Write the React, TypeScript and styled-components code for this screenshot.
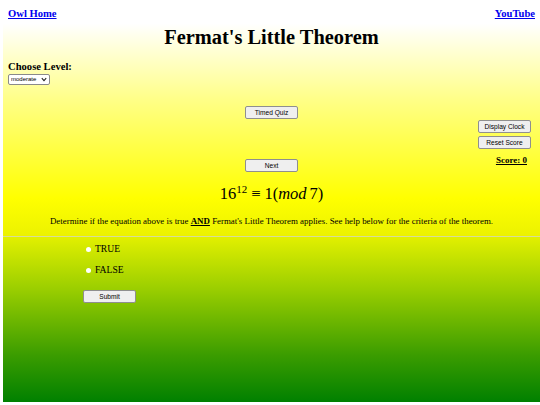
import React from "react";
import styled, { createGlobalStyle } from "styled-components";

const GlobalStyle = createGlobalStyle`
  html, body {
    margin: 0;
    padding: 0;
    background: #ffffff;
  }
  body {
    font-family: "Liberation Serif", "Times New Roman", serif;
    color: #000000;
  }
`;

const serif = `"Liberation Serif", "Times New Roman", serif`;
const sans = `"Liberation Sans", Arial, sans-serif`;

const Page = styled.div`
  width: 537px;
  margin-left: 3px;
`;

const TopSection = styled.div`
  height: 236px;
  background: linear-gradient(to bottom, #ffffff 10%, #ffff88 42%, #ffff00 84%, #ecf200 100%);
  border-bottom: 1px solid #d6dc9a;
  display: flex;
  flex-direction: column;
`;

const NavRow = styled.div`
  display: flex;
  justify-content: space-between;
  padding: 8px 5px 0 5px;
`;

const NavLink = styled.a`
  font-family: ${serif};
  font-size: 10.6px;
  font-weight: bold;
  color: #0000ee;
  text-decoration: underline;
`;

const Title = styled.h1`
  margin: 5px 0 0 0;
  text-align: center;
  font-family: ${serif};
  font-size: 20.4px;
  line-height: 26px;
  font-weight: bold;
`;

const LevelBlock = styled.div`
  margin-top: 10px;
  padding-left: 5px;
  display: flex;
  flex-direction: column;
  align-items: flex-start;
`;

const LevelLabel = styled.label`
  font-family: ${serif};
  font-size: 10.6px;
  font-weight: bold;
  line-height: 13px;
`;

const SelectWrap = styled.div`
  position: relative;
  width: 42px;
  height: 11px;
  margin-top: 1px;
`;

const LevelSelect = styled.select`
  appearance: none;
  display: block;
  width: 42px;
  height: 11px;
  margin: 0;
  padding: 0 0 0 2px;
  font-family: ${sans};
  font-size: 6px;
  line-height: 9px;
  color: #000000;
  border: 1px solid #8a8a8a;
  border-radius: 2px;
  background: #ffffff;
`;

const Chevron = styled.svg`
  position: absolute;
  right: 3px;
  top: 3px;
  pointer-events: none;
`;

const Controls = styled.div`
  margin-top: 21px;
  display: grid;
  grid-template-columns: 1fr auto 1fr;
`;

const CenterColumn = styled.div`
  grid-column: 2;
  display: flex;
  flex-direction: column;
  align-items: center;
  gap: 40px;
`;

const SidePanel = styled.div`
  grid-column: 3;
  display: flex;
  flex-direction: column;
  align-items: flex-end;
  padding: 14px 9px 0 0;
  gap: 3px;
`;

const Button = styled.button`
  width: 53px;
  height: 13px;
  padding: 0;
  font-family: ${sans};
  font-size: 6.6px;
  color: #000000;
  background: #efefef;
  border: 1px solid #8f8f8f;
  border-radius: 2px;
  line-height: 11px;
`;

const Score = styled.span`
  margin-top: 3px;
  margin-right: 4px;
  font-family: ${serif};
  font-size: 9px;
  font-weight: bold;
  text-decoration: underline;
  line-height: 11px;
`;

const Equation = styled.div`
  margin-top: 12px;
  text-align: center;
  font-family: ${serif};
  font-size: 16.5px;
  line-height: 20px;
`;

const Sup = styled.sup`
  font-size: 11px;
  vertical-align: 6px;
  line-height: 0;
`;

const Relation = styled.span`
  margin: 0 4px;
`;

const Italic = styled.i`
  font-style: italic;
  margin-right: 3px;
`;

const Instruction = styled.p`
  margin: 11px 0 0 0;
  text-align: center;
  font-family: ${serif};
  font-size: 8.9px;
  line-height: 12px;
`;

const Strong = styled.b`
  text-decoration: underline;
`;

const BottomSection = styled.div`
  height: 165px;
  background: linear-gradient(to bottom, #e2f000 0%, #9ed000 30%, #3a9c00 72%, #008000 100%);
  padding: 6px 0 0 80px;
  box-sizing: border-box;
`;

const Options = styled.div`
  display: flex;
  flex-direction: column;
  gap: 9px;
  padding-left: 3px;
`;

const Option = styled.label`
  display: flex;
  align-items: center;
  gap: 4px;
  font-family: ${serif};
  font-size: 9.6px;
  line-height: 12px;
`;

const Radio = styled.input`
  appearance: none;
  margin: 0;
  width: 5px;
  height: 5px;
  border-radius: 50%;
  background: #ffffff;
  border: none;
`;

const SubmitRow = styled.div`
  margin-top: 9px;
`;

export default function App() {
  return (
    <>
      <GlobalStyle />
      <Page>
        <TopSection>
          <NavRow>
            <NavLink href="#">Owl Home</NavLink>
            <NavLink href="#">YouTube</NavLink>
          </NavRow>
          <Title>Fermat's Little Theorem</Title>
          <LevelBlock>
            <LevelLabel>Choose Level:</LevelLabel>
            <SelectWrap>
              <LevelSelect defaultValue="moderate">
                <option value="easy">easy</option>
                <option value="moderate">moderate</option>
                <option value="hard">hard</option>
              </LevelSelect>
              <Chevron width="6" height="5" viewBox="0 0 6 5">
                <path d="M0.8 1.2 L3 3.6 L5.2 1.2" fill="none" stroke="#222" strokeWidth="1.1" />
              </Chevron>
            </SelectWrap>
          </LevelBlock>
          <Controls>
            <CenterColumn>
              <Button>Timed Quiz</Button>
              <Button>Next</Button>
            </CenterColumn>
            <SidePanel>
              <Button>Display Clock</Button>
              <Button>Reset Score</Button>
              <Score>Score: 0</Score>
            </SidePanel>
          </Controls>
          <Equation>
            16<Sup>12</Sup>
            <Relation>≡</Relation>1(<Italic>mod</Italic>7)
          </Equation>
          <Instruction>
            Determine if the equation above is true <Strong>AND</Strong> Fermat's Little Theorem applies. See help below for
            the criteria of the theorem.
          </Instruction>
        </TopSection>
        <BottomSection>
          <Options>
            <Option>
              <Radio type="radio" name="answer" />
              TRUE
            </Option>
            <Option>
              <Radio type="radio" name="answer" />
              FALSE
            </Option>
          </Options>
          <SubmitRow>
            <Button>Submit</Button>
          </SubmitRow>
        </BottomSection>
      </Page>
    </>
  );
}
